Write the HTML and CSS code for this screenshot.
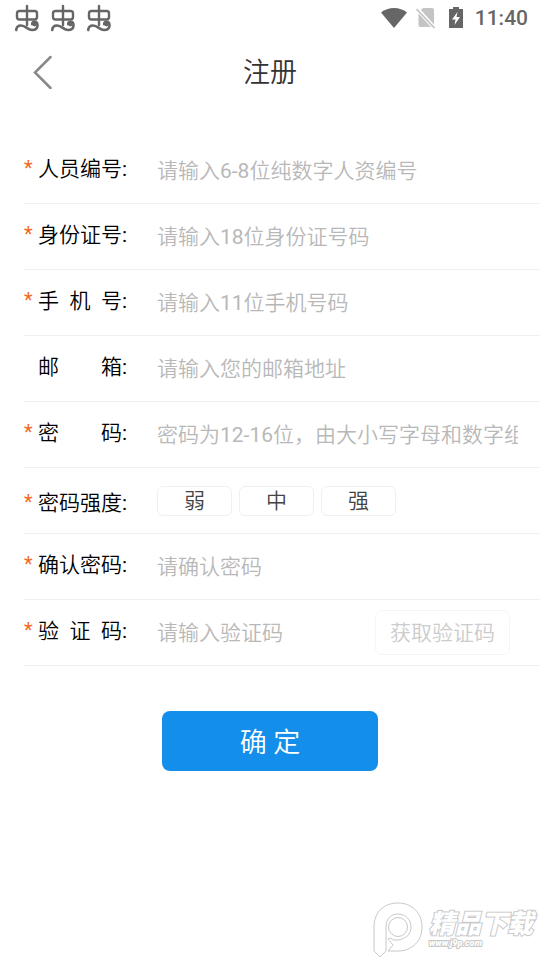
FILE: index.html
```html
<!DOCTYPE html>
<html lang="zh-CN">
<head>
<meta charset="utf-8">
<meta name="viewport" content="width=device-width, initial-scale=1">
<title>注册</title>
<link rel="stylesheet" href="styles.css">
</head>
<body>
<svg class="sprite" aria-hidden="true">
  <symbol id="bug" viewBox="0 0 26 28">
    <g fill="none" stroke="#666" stroke-width="2.400" stroke-linecap="round" stroke-linejoin="round">
      <rect x="3" y="7" width="20" height="8.500" rx="2.500"/>
      <path d="M13 2v19"/>
      <path d="M2.200 26c.3-3 2-4.500 4.800-4.500 5 0 6.500 4.500 11 4.500 3.500 0 5.500-2 5.500-4.800 0-2.200-1.200-3.400-2.800-3.400-1.500 0-2.500 1-2.500 2.400" stroke-width="2.600"/>
      <circle cx="20.500" cy="20.300" r="1.300" fill="#666" stroke-width="1.600"/>
    </g>
  </symbol>
</svg>

<header class="status">
  <div class="status-left">
    <svg class="bug"><use href="#bug"/></svg>
    <svg class="bug"><use href="#bug"/></svg>
    <svg class="bug"><use href="#bug"/></svg>
  </div>
  <div class="status-right">
    <svg class="wifi" viewBox="0 0 26 21"><path fill="#666" d="M0 4.500C7-1.500 19-1.500 26 4.500L13 20z"/></svg>
    <svg class="sim" viewBox="0 0 20 22"><path fill="#c4c4c4" d="M7 1h9q2 0 2 2v14.500L5 3zM2.500 6.500L15 20H4.500q-2 0-2-2z"/><path d="M.5 2l18 19" stroke="#c4c4c4" stroke-width="1.800"/></svg>
    <svg class="battery" viewBox="0 0 14 22"><path fill="#666" d="M4 0h6v2h4v19H0V2h4z"/><path fill="#fff" d="M8.500 5L3 12.500h3.500L5.500 18 11 10H7.500z"/></svg>
    <time>11:40</time>
  </div>
</header>

<nav class="navbar">
  <button class="back" type="button" aria-label="返回">
    <svg viewBox="0 0 20 34"><path d="M17.500 2L2 17.500 17.500 33" fill="none" stroke="#888" stroke-width="2.500" stroke-linecap="round"/></svg>
  </button>
  <h1>注册</h1>
</nav>

<form class="form" id="register">
  <div class="row">
    <label for="staff"><span class="star">*</span><span class="name">人员编号</span>:</label>
    <input id="staff" type="text" placeholder="请输入6-8位纯数字人资编号">
  </div>
  <div class="row">
    <label for="idcard"><span class="star">*</span><span class="name">身份证号</span>:</label>
    <input id="idcard" type="text" placeholder="请输入18位身份证号码">
  </div>
  <div class="row">
    <label for="phone"><span class="star">*</span><span class="name">手 机 号</span>:</label>
    <input id="phone" type="tel" placeholder="请输入11位手机号码">
  </div>
  <div class="row">
    <label for="email"><span class="star"></span><span class="name">邮 箱</span>:</label>
    <input id="email" type="email" placeholder="请输入您的邮箱地址">
  </div>
  <div class="row">
    <label for="password"><span class="star">*</span><span class="name">密 码</span>:</label>
    <input id="password" type="password" placeholder="密码为12-16位，由大小写字母和数字组成">
  </div>
  <div class="row">
    <div class="label"><span class="star">*</span><span class="name">密码强度</span>:</div>
    <div class="levels">
      <span class="level">弱</span>
      <span class="level">中</span>
      <span class="level">强</span>
    </div>
  </div>
  <div class="row">
    <label for="confirm"><span class="star">*</span><span class="name">确认密码</span>:</label>
    <input id="confirm" type="password" placeholder="请确认密码">
  </div>
  <div class="row">
    <label for="code"><span class="star">*</span><span class="name">验 证 码</span>:</label>
    <input id="code" type="text" placeholder="请输入验证码">
    <button class="get-code" type="button">获取验证码</button>
  </div>
</form>
<div class="actions">
  <button class="submit" type="submit" form="register">确 定</button>
</div>

<aside class="watermark">
  <svg class="mark" viewBox="0 0 50 56"><g fill="#fff" stroke="#c8c8c8" stroke-linejoin="round"><path d="M1 25C1 10 11 1 25 1s24 10 24 24-10 24-24 24H15l5-6-5-6 2-1 4 2h4c8-1 13-6 13-13S33 12 25 12s-12 6-12 13v24l-6 6-6-6z"/><circle cx="25" cy="25" r="9.500"/></g></svg>
  <div class="brand">
    <span class="brand-name">精品下载</span>
    <span class="brand-url">www.j9p.com</span>
  </div>
</aside>
</body>
</html>
```
FILE: styles.css
```css
* {
  box-sizing: border-box;
}

body {
  margin: 0;
  min-height: 100vh;
  position: relative;
  background: #fff;
  color: #000;
  font: 400 21px/30px Roboto, "Noto Sans CJK SC DemiLight", "Noto Sans CJK SC", sans-serif;
}

button,
input {
  font: inherit;
  margin: 0;
}

.sprite {
  position: absolute;
  width: 0;
  height: 0;
}

.status {
  display: flex;
  justify-content: space-between;
  align-items: center;
  height: 36px;
  padding: 0 12px 0 14px;
}

.status-left {
  display: flex;
  gap: 10px;
}

.bug {
  width: 26px;
  height: 28px;
}

.status-right {
  display: flex;
  align-items: center;
  color: #666;
  font-weight: 500;
}

.wifi {
  width: 26px;
  height: 21px;
}

.sim {
  width: 20px;
  height: 22px;
  margin-left: 9px;
}

.battery {
  width: 14px;
  height: 22px;
  margin: 0 12px 0 13px;
}

.navbar {
  display: grid;
  grid-template-columns: 60px 1fr 60px;
  align-items: center;
  height: 72px;
}

.back {
  display: flex;
  justify-content: flex-end;
  padding: 0 7px 0 0;
  border: 0;
  background: none;
}

.back svg {
  width: 20px;
  height: 34px;
}

h1 {
  margin: 0;
  padding-top: 2px;
  color: #333;
  font-size: 27px;
  font-weight: 400;
  line-height: 40px;
  text-align: center;
}

.form {
  padding: 30px 0 0 24px;
}

.row {
  display: flex;
  align-items: center;
  height: 66px;
  padding-right: 22px;
  border-bottom: 1px solid #f0f0f0;
}

.row label,
.label {
  display: flex;
  flex: none;
  width: 133px;
  padding-bottom: 4px;
}

.row .label {
  padding: 4px 0 0;
}

.star {
  width: 14px;
  color: #f06a1d;
  font-size: 20px;
  line-height: 28px;
}

.name {
  width: 84px;
  text-align: justify;
  text-align-last: justify;
}

.row input {
  flex: 1;
  min-width: 0;
  height: 40px;
  padding: 0;
  border: 0;
  outline: 0;
  background: none;
}

.row input::placeholder {
  color: #b8b8b8;
}

.levels {
  display: flex;
  gap: 7px;
}

.level {
  width: 75px;
  height: 30px;
  border: 1px solid #f0f0f0;
  border-radius: 6px;
  color: #444;
  line-height: 28px;
  text-align: center;
}

.get-code {
  height: 45px;
  margin-right: 8px;
  padding: 0 14px;
  border: 1px solid #f5f5f5;
  border-radius: 7px;
  background: #fff;
  color: #ccc;
}

.actions {
  padding-top: 45px;
  text-align: center;
}

.submit {
  width: 216px;
  height: 60px;
  padding: 4px 0 0;
  border: 0;
  border-radius: 8px;
  background: #148eeb;
  color: #fff;
  font-size: 27px;
}

.watermark {
  position: absolute;
  right: 7px;
  bottom: 2px;
  display: flex;
  gap: 6px;
  color: #fff;
  font-family: Roboto, "Noto Sans CJK SC", sans-serif;
  font-style: italic;
  font-weight: 900;
}

.mark {
  width: 50px;
  height: 56px;
}

.brand {
  display: flex;
  flex-direction: column;
  padding-top: 8px;
}

.brand-name,
.brand-url {
  paint-order: stroke;
  -webkit-text-stroke: 2px #c8c8c8;
}

.brand-name {
  font-size: 26px;
  line-height: 28px;
}

.brand-url {
  font-size: 9px;
  line-height: 10px;
}
```
